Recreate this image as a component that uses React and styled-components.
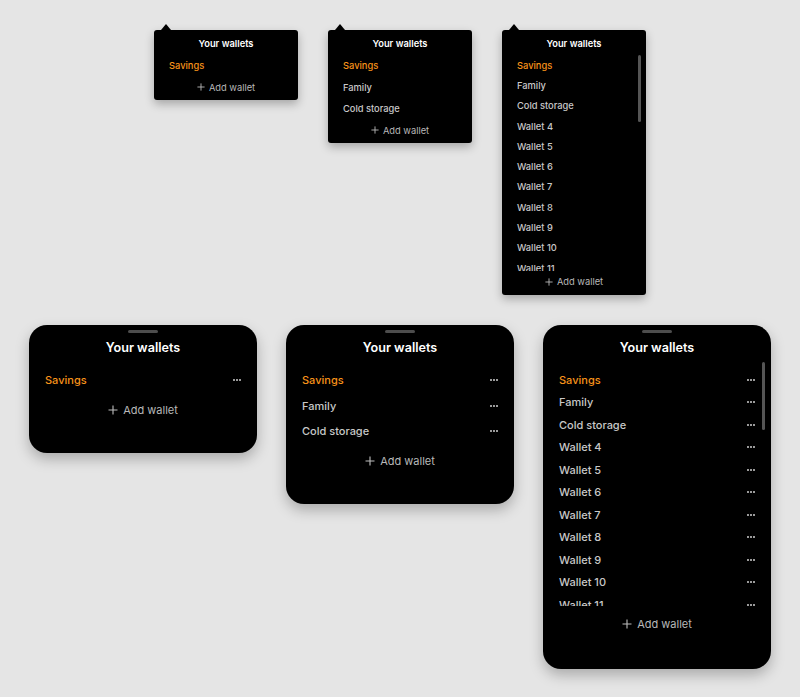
import React from "react";
import styled, { createGlobalStyle } from "styled-components";

const GlobalStyle = createGlobalStyle`
  html, body {
    margin: 0;
    padding: 0;
    background: #e5e5e5;
    font-family: Inter, "Noto Sans", sans-serif;
  }
`;

const ORANGE = "#f7931a";

const manyWallets = [
  "Savings",
  "Family",
  "Cold storage",
  ...Array.from({ length: 9 }, (_, i) => `Wallet ${i + 4}`),
];

const Page = styled.div`
  display: flex;
  flex-direction: column;
  align-items: center;
  gap: 30px;
  padding-top: 30px;
  padding-bottom: 28px;
`;

const Row = styled.div`
  display: flex;
  align-items: flex-start;
  justify-content: center;
  gap: ${(p) => p.$gap}px;
`;

/* ---------- popover ---------- */

const Popover = styled.div`
  position: relative;
  width: 144px;
  background: #000;
  border-radius: 3px;
  padding: 8px 0 2px;
  box-sizing: border-box;
  box-shadow: 0 4px 10px rgba(0, 0, 0, 0.28);

  &::before {
    content: "";
    position: absolute;
    top: -6px;
    left: 7px;
    border-left: 5px solid transparent;
    border-right: 5px solid transparent;
    border-bottom: 6px solid #000;
  }
`;

const PopTitle = styled.div`
  text-align: center;
  color: #fff;
  font-size: 9.3px;
  font-weight: 600;
  line-height: 12px;
`;

const ScrollArea = styled.div`
  position: relative;
  margin-top: ${(p) => p.$top}px;
  height: ${(p) => (p.$height ? `${p.$height}px` : "auto")};
  overflow: hidden;
  padding-top: ${(p) => p.$pad || 0}px;
  box-sizing: border-box;
`;

const Thumb = styled.div`
  position: absolute;
  right: ${(p) => p.$right}px;
  top: ${(p) => p.$top}px;
  width: 3px;
  height: ${(p) => p.$height}px;
  border-radius: 2px;
  background: #555;
`;

const PopItem = styled.div`
  height: ${(p) => p.$h}px;
  display: flex;
  align-items: center;
  padding-left: 15px;
  font-size: 9.3px;
  font-weight: 500;
  color: ${(p) => (p.$active ? ORANGE : "#c9c9c9")};
`;

const AddRow = styled.div`
  height: ${(p) => p.$h}px;
  display: flex;
  align-items: center;
  justify-content: center;
  gap: ${(p) => p.$gap}px;
  color: #b8b8b8;
  font-size: ${(p) => p.$size}px;
  font-weight: 400;
`;

const Plus = ({ size }) => (
  <svg width={size} height={size} viewBox="0 0 10 10" fill="none">
    <path d="M5 0.5v9M0.5 5h9" stroke="#bdbdbd" strokeWidth="1.1" />
  </svg>
);

const WalletPopover = ({ wallets, scroll }) => (
  <Popover>
    <PopTitle>Your wallets</PopTitle>
    <ScrollArea $top={5} $height={scroll ? 216 : 0}>
      {wallets.map((w, i) => (
        <PopItem key={w} $h={scroll ? 20.3 : 21.5} $active={i === 0}>
          {w}
        </PopItem>
      ))}
      {scroll && <Thumb $right={5} $top={0} $height={67} />}
    </ScrollArea>
    <AddRow $h={21.5} $gap={4} $size={9.3}>
      <Plus size={8} />
      Add wallet
    </AddRow>
  </Popover>
);

/* ---------- sheet ---------- */

const Sheet = styled.div`
  position: relative;
  width: 228px;
  background: #000;
  border-radius: 18px;
  padding: 5px 0 26px;
  box-sizing: border-box;
  box-shadow: 0 6px 14px rgba(0, 0, 0, 0.26);
  display: flex;
  flex-direction: column;
`;

const Handle = styled.div`
  align-self: center;
  width: 30px;
  height: 3px;
  border-radius: 2px;
  background: #4d4d4d;
`;

const SheetTitle = styled.div`
  margin-top: 7px;
  text-align: center;
  color: #fff;
  font-size: 12.6px;
  font-weight: 600;
  line-height: 16px;
`;

const SheetItem = styled.div`
  height: ${(p) => p.$h}px;
  display: flex;
  align-items: center;
  justify-content: space-between;
  padding: 0 16px;
  font-size: 11px;
  font-weight: 500;
  color: ${(p) => (p.$active ? ORANGE : "#c8c8c8")};
`;

const Dots = styled.span`
  display: flex;
  gap: 1px;

  i {
    width: 2px;
    height: 2px;
    background: #9a9a9a;
  }
`;

const More = () => (
  <Dots>
    <i />
    <i />
    <i />
  </Dots>
);

const WalletSheet = ({ wallets, scroll }) => (
  <Sheet>
    <Handle />
    <SheetTitle>Your wallets</SheetTitle>
    <ScrollArea $top={12} $height={scroll ? 238 : 0} $pad={scroll ? 1 : 0}>
      {wallets.map((w, i) => (
        <SheetItem key={w} $h={scroll ? 22.5 : 25.5} $active={i === 0}>
          {w}
          <More />
        </SheetItem>
      ))}
    </ScrollArea>
    {scroll && <Thumb $right={6} $top={37} $height={68} />}
    <AddRow $h={scroll ? 37 : 34} $gap={5} $size={11}>
      <Plus size={10} />
      Add wallet
    </AddRow>
  </Sheet>
);

const App = () => (
  <>
    <GlobalStyle />
    <Page>
      <Row $gap={30}>
        <WalletPopover wallets={manyWallets.slice(0, 1)} />
        <WalletPopover wallets={manyWallets.slice(0, 3)} />
        <WalletPopover wallets={manyWallets} scroll />
      </Row>
      <Row $gap={29}>
        <WalletSheet wallets={manyWallets.slice(0, 1)} />
        <WalletSheet wallets={manyWallets.slice(0, 3)} />
        <WalletSheet wallets={manyWallets} scroll />
      </Row>
    </Page>
  </>
);

export default App;
